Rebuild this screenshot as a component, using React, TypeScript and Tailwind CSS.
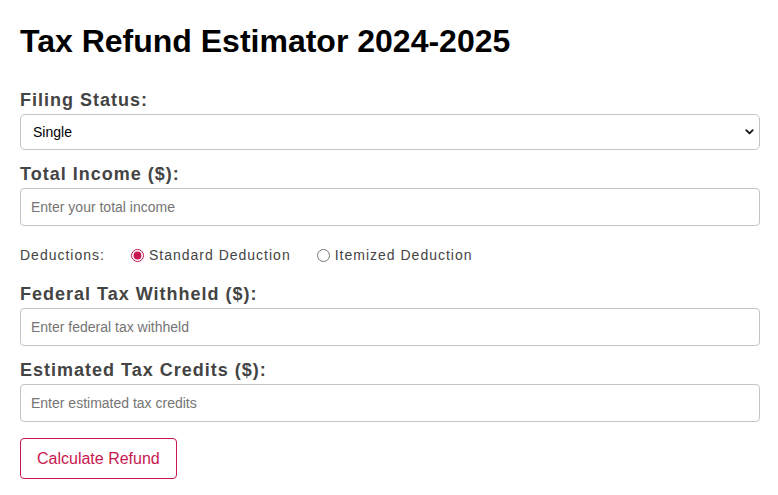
import { useState } from "react";

const labelCls = "block text-[18px] leading-[21px] font-bold tracking-[1px] text-[#444] mb-[3px]";
const inputCls =
  "block w-full h-[38px] px-[10px] text-[14px] text-black border border-[#c4c4c4] rounded-[4px] bg-white outline-none placeholder:text-[#757575]";

function Field({ label, placeholder }: { label: string; placeholder: string }) {
  return (
    <div className="mb-[14px]">
      <label className={labelCls}>{label}</label>
      <input type="number" placeholder={placeholder} className={inputCls} />
    </div>
  );
}

export default function App() {
  const [status, setStatus] = useState("single");
  const [deduction, setDeduction] = useState("standard");

  return (
    <div className="bg-white pl-5 pr-[18px] pt-[23px] pb-4 font-['Liberation_Sans',Arial,sans-serif]">
      <h1 className="text-[32px] leading-[37px] font-bold text-black mb-[30px]">Tax Refund Estimator 2024-2025</h1>

      <div className="mb-[14px]">
        <label className={labelCls}>Filing Status:</label>
        <div className="relative">
          <select
            value={status}
            onChange={(e) => setStatus(e.target.value)}
            className="block w-full h-[36px] appearance-none pl-[12px] pr-8 text-[14px] text-black border border-[#c4c4c4] rounded-[5px] bg-white outline-none"
          >
            <option value="single">Single</option>
            <option value="married-joint">Married Filing Jointly</option>
            <option value="married-separate">Married Filing Separately</option>
            <option value="head">Head of Household</option>
          </select>
          <svg
            viewBox="0 0 10 7"
            className="pointer-events-none absolute right-[6px] top-1/2 -translate-y-1/2 w-[9px] h-[6px]"
          >
            <path d="M1.2 1.3 L5 5.2 L8.8 1.3" fill="none" stroke="#111" strokeWidth="2" strokeLinecap="round" strokeLinejoin="round" />
          </svg>
        </div>
      </div>

      <Field label="Total Income ($):" placeholder="Enter your total income" />

      {/* margins collapse with the field above, so 19px is the real gap */}
      <div className="flex items-center h-[20px] mt-[19px] mb-[19px] text-[14px] tracking-[1px] text-[#444]">
        <span className="mr-[26px]">Deductions:</span>
        <label className="flex items-center gap-[5px] mr-[26px]">
          <input
            type="radio"
            name="deduction"
            checked={deduction === "standard"}
            onChange={() => setDeduction("standard")}
            className="m-0 w-[13px] h-[13px] accent-[#c8174f]"
          />
          Standard Deduction
        </label>
        <label className="flex items-center gap-[5px]">
          <input
            type="radio"
            name="deduction"
            checked={deduction === "itemized"}
            onChange={() => setDeduction("itemized")}
            className="m-0 w-[13px] h-[13px] accent-[#c8174f]"
          />
          Itemized Deduction
        </label>
      </div>

      <Field label="Federal Tax Withheld ($):" placeholder="Enter federal tax withheld" />
      <Field label="Estimated Tax Credits ($):" placeholder="Enter estimated tax credits" />

      <button className="mt-[2px] h-[41px] px-4 text-[16px] text-[#c8174f] bg-white border border-[#c8174f] rounded-[4px]">
        Calculate Refund
      </button>
    </div>
  );
}
